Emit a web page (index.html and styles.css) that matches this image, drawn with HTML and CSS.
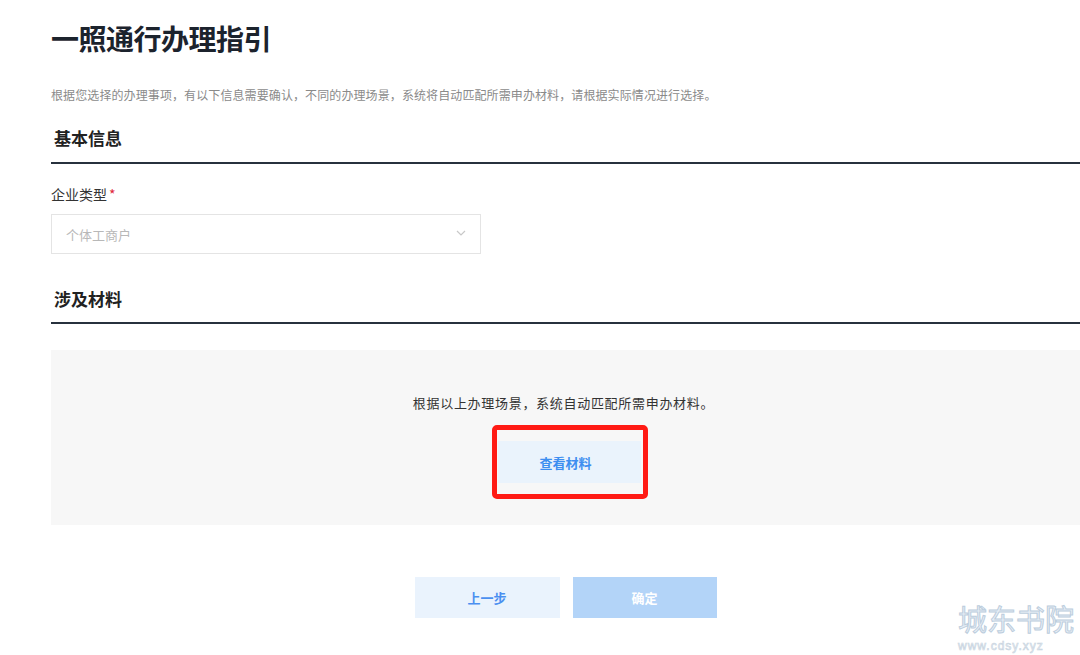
FILE: index.html
```html
<!DOCTYPE html>
<html lang="zh-CN">
<head>
<meta charset="utf-8">
<title>一照通行办理指引</title>
<link rel="stylesheet" href="styles.css">
</head>
<body>
<div class="page">
  <h1 class="title">一照通行办理指引</h1>
  <p class="desc">根据您选择的办理事项，有以下信息需要确认，不同的办理场景，系统将自动匹配所需申办材料，请根据实际情况进行选择。</p>

  <div class="section-head">基本信息</div>
  <div class="field-label">企业类型<span class="req">*</span></div>
  <div class="select">
    <span class="placeholder">个体工商户</span>
    <svg class="chevron" width="10" height="6" viewBox="0 0 10 6"><path d="M1 1l4 4 4-4" fill="none" stroke="#c8c8c8" stroke-width="1.2"/></svg>
  </div>

  <div class="section-head second">涉及材料</div>
  <div class="panel">
    <p class="panel-text">根据以上办理场景，系统自动匹配所需申办材料。</p>
    <div class="view-wrap">
      <button class="btn-view">查看材料</button>
      <span class="highlight"></span>
    </div>
  </div>

  <div class="footer">
    <button class="btn btn-prev">上一步</button>
    <button class="btn btn-ok">确定</button>
  </div>

  <div class="watermark">
    <div class="wm-cn">城东书院</div>
    <div class="wm-en">www.cdsy.xyz</div>
  </div>
</div>
</body>
</html>
```
FILE: styles.css
```css
* { box-sizing: border-box; }
html, body { margin: 0; padding: 0; background: #fff; }
body {
  font-family: "Noto Sans CJK SC", "Noto Sans", "Liberation Sans", sans-serif;
  color: #333;
  width: 1080px;
  height: 655px;
  overflow: hidden;
}
.page {
  position: relative;
  padding-left: 51px;
  height: 655px;
}
.title {
  margin: 0;
  padding-top: 18px;
  font-size: 28px;
  line-height: 40px;
  font-weight: 700;
  color: #1c232d;
  letter-spacing: -0.5px;
}
.desc {
  margin: 27px 0 0;
  font-size: 12px;
  line-height: 20px;
  color: #8a8a8a;
  letter-spacing: 0.1px;
  white-space: nowrap;
}
.section-head {
  margin-top: 21px;
  padding-left: 3px;
  font-size: 17px;
  line-height: 24px;
  font-weight: 700;
  color: #222;
  padding-bottom: 12px;
  border-bottom: 2px solid #27313d;
}
.section-head.second {
  margin-top: 33px;
  padding-bottom: 11px;
}
.field-label {
  margin-top: 20px;
  font-size: 14px;
  line-height: 20px;
  color: #333;
}
.req { color: #e0263a; margin-left: 2px; }
.select {
  margin-top: 10px;
  width: 430px;
  height: 40px;
  border: 1px solid #e4e4e4;
  display: flex;
  align-items: center;
  justify-content: space-between;
  padding: 0 14px 0 14px;
}
.placeholder {
  font-size: 13px;
  color: #b8b8b8;
}
.chevron { margin-top: -2px; }
.panel {
  margin-top: 26px;
  height: 175px;
  background: #f7f7f7;
  display: flex;
  flex-direction: column;
  align-items: center;
  padding-top: 43px;
}
.panel-text {
  margin: 0;
  font-size: 13px;
  line-height: 20px;
  color: #333;
  letter-spacing: 0.7px;
  padding-right: 4px;
}
.view-wrap {
  position: relative;
  margin-top: 28px;
  margin-left: 8px;
}
.btn-view {
  display: block;
  width: 143px;
  height: 42px;
  border: 0;
  background: #eaf3fc;
  color: #3d8ef0;
  font-family: inherit;
  font-size: 13px;
  font-weight: 700;
  padding: 0;
  text-indent: -8px;
}
.highlight {
  position: absolute;
  left: -6px;
  right: -7px;
  top: -16px;
  bottom: -16px;
  border: 5px solid #ff1a14;
  border-radius: 5px;
}
.footer {
  margin-top: 52px;
  display: flex;
  justify-content: center;
  gap: 13px;
}
.btn {
  width: 145px;
  height: 41px;
  border: 0;
  font-family: inherit;
  font-size: 13px;
  font-weight: 700;
}
.btn-prev {
  background: #eaf3fd;
  color: #4b8ff0;
}
.btn-ok {
  width: 144px;
  background: #b3d4f8;
  color: #fff;
}
.watermark {
  position: absolute;
  right: 0;
  bottom: 3px;
  width: 122px;
}
.wm-cn {
  font-size: 29px;
  line-height: 30px;
  height: 30px;
  color: #e8eff6;
  -webkit-text-stroke: 1px #bccddd;
  white-space: nowrap;
}
.wm-en {
  margin-top: 7px;
  font-family: "Liberation Sans", sans-serif;
  font-size: 12px;
  line-height: 12px;
  letter-spacing: 1px;
  color: #eef2f6;
  -webkit-text-stroke: 0.6px #c8d4e0;
  white-space: nowrap;
}
```
